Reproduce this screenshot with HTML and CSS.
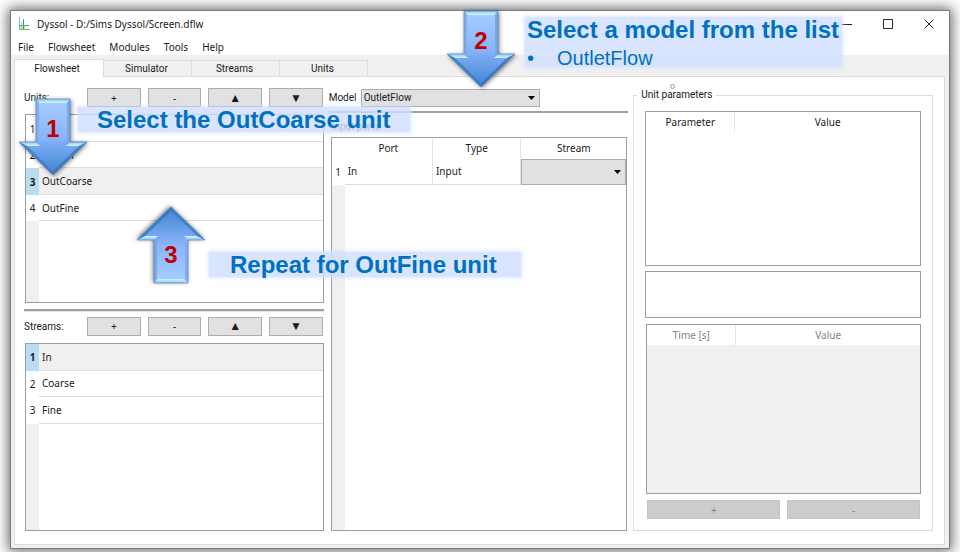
FILE: index.html
```html
<!DOCTYPE html>
<html lang="en">
<head>
<meta charset="utf-8">
<title>Dyssol - D:/Sims Dyssol/Screen.dflw</title>
<link rel="stylesheet" href="styles.css">
</head>
<body>
<svg class="defs" width="0" height="0" aria-hidden="true">
  <defs>
    <linearGradient id="face" x1="0" y1="0" x2="0" y2="1">
      <stop offset="0" stop-color="#a6ceff"/>
      <stop offset=".5" stop-color="#8ab4fb"/>
      <stop offset=".7" stop-color="#6aa0ea"/>
      <stop offset="1" stop-color="#3f82d0"/>
    </linearGradient>
    <linearGradient id="shine" x1="0" y1="0" x2="0" y2="1">
      <stop offset="0" stop-color="#8cc4f6"/>
      <stop offset="1" stop-color="#d6f6ff"/>
    </linearGradient>
    <symbol id="arrow" viewBox="0 0 68 78">
      <path d="M17 1H51V44H68L34 77L0 44H17Z" fill="url(#face)"/>
      <path d="M17 1H51L47 5H21Z" fill="url(#shine)"/>
      <path d="M0 44H17L21 48H8ZM51 44H68L60 48H47Z" fill="url(#shine)"/>
      <path d="M17 1L20 5V47L17 44Z" fill="#82aeec"/>
      <path d="M51 1L48 5V47L51 44Z" fill="#7aa6ec"/>
      <path d="M0 44L8 48L34 73V77Z" fill="#3d78bf" fill-opacity=".75"/>
      <path d="M68 44L60 48L34 73V77Z" fill="#3570b8" fill-opacity=".75"/>
      <path d="M17 1H51V44H68L34 77L0 44H17Z" fill="none" stroke="#4a7ebb" stroke-opacity=".6"/>
    </symbol>
  </defs>
</svg>

<main class="window">
  <header class="titlebar">
    <svg class="logo" viewBox="0 0 14 14" aria-hidden="true">
      <path d="M2 9H8V13H2Z" fill="#e4e650" fill-opacity=".8"/>
      <path d="M1.500 0V13" stroke="#6cc0c8" fill="none"/>
      <path d="M5.500 2V13" stroke="#3b8fb5" fill="none"/>
      <path d="M3.500 5V12" stroke="#b9d86a" fill="none"/>
      <path d="M1 8.500H11" stroke="#4aa3c4" fill="none"/>
      <path d="M2 12.500H12" stroke="#6fb9a8" fill="none"/>
    </svg>
    <h1 class="title">Dyssol - D:/Sims Dyssol/Screen.dflw</h1>
    <button class="caption" aria-label="Minimize"><svg viewBox="0 0 10 10"><path d="M0 5.500H10"/></svg></button>
    <button class="caption" aria-label="Maximize"><svg viewBox="0 0 10 10"><path d="M.5 .5H9.500V9.500H.5Z"/></svg></button>
    <button class="caption" aria-label="Close"><svg viewBox="0 0 10 10"><path d="M.5 .5L9.500 9.500M9.500 .5L.5 9.500"/></svg></button>
  </header>

  <nav class="menu">
    <button>File</button><button>Flowsheet</button><button>Modules</button><button>Tools</button><button>Help</button>
  </nav>

  <div class="workspace">
    <div class="tabs" role="tablist">
      <button class="tab active" role="tab" aria-selected="true">Flowsheet</button>
      <button class="tab" role="tab">Simulator</button>
      <button class="tab" role="tab">Streams</button>
      <button class="tab" role="tab">Units</button>
    </div>

    <div class="pane">
      <section class="column">
        <div class="toolbar">
          <span class="toolbar-label">Units:</span>
          <button class="push">+</button><button class="push">-</button><button class="push move">▲</button><button class="push move">▼</button>
        </div>
        <div class="list">
          <table>
            <tr><th scope="row">1</th><td></td></tr>
            <tr><th scope="row">2</th><td>Screen</td></tr>
            <tr class="selected"><th scope="row">3</th><td>OutCoarse</td></tr>
            <tr><th scope="row">4</th><td>OutFine</td></tr>
          </table>
        </div>
        <hr>
        <div class="toolbar">
          <span class="toolbar-label">Streams:</span>
          <button class="push">+</button><button class="push">-</button><button class="push move">▲</button><button class="push move">▼</button>
        </div>
        <div class="list">
          <table>
            <tr class="selected"><th scope="row">1</th><td>In</td></tr>
            <tr><th scope="row">2</th><td>Coarse</td></tr>
            <tr><th scope="row">3</th><td>Fine</td></tr>
          </table>
        </div>
      </section>

      <section class="column">
        <div class="model">
          <label for="model">Model</label>
          <select id="model"><option>OutletFlow</option></select>
        </div>
        <hr class="model-rule">
        <h2 class="ports-title">Input ports</h2>
        <div class="list ports">
          <table>
            <thead><tr><td class="corner"></td><th>Port</th><th>Type</th><th class="stream">Stream</th></tr></thead>
            <tbody><tr><th scope="row">1</th><td>In</td><td>Input</td><td class="cell-select"><select aria-label="Stream"><option></option></select></td></tr></tbody>
          </table>
        </div>
      </section>

      <fieldset class="params">
        <legend>Unit parameters</legend>
        <div class="grid-box parameters"><table><tr><th class="first">Parameter</th><th>Value</th></tr></table></div>
        <textarea class="description" aria-label="Description"></textarea>
        <div class="grid-box times"><table><tr><th class="first">Time [s]</th><th>Value</th></tr></table></div>
        <div class="pair"><button class="push" disabled>+</button><button class="push" disabled>-</button></div>
      </fieldset>
    </div>
  </div>
</main>

<aside class="callout one">Select the OutCoarse unit</aside>
<aside class="callout two">Select a model from the list
  <ul><li>OutletFlow</li></ul>
</aside>
<aside class="callout three">Repeat for OutFine unit</aside>
<div class="step s1"><svg><use href="#arrow"/></svg><b>1</b></div>
<div class="step s2"><svg><use href="#arrow"/></svg><b>2</b></div>
<div class="step s3"><svg><use href="#arrow"/></svg><b>3</b></div>
<span class="handle"></span>
</body>
</html>
```
FILE: styles.css
```css
* { box-sizing: border-box; }
body {
  position: relative;
  margin: 0;
  min-height: 100vh;
  padding: 10px 10px 3px;
  display: flex;
  overflow: hidden;
  background: #fff;
  color: #1a1a1a;
  font: 10px/14px "Noto Sans", "Open Sans", sans-serif;
}
button, select, textarea { font: inherit; color: inherit; border-radius: 0; margin: 0; }
.defs { position: absolute; }

.window {
  flex: 1;
  display: flex;
  flex-direction: column;
  border: 1px solid #7b7b7b;
  background: #fff;
  box-shadow: 0 0 12px 2px rgba(0, 0, 0, .6);
}

.titlebar { display: flex; align-items: center; height: 26px; padding-left: 7px; }
.logo { width: 14px; height: 14px; margin-right: 5px; }
.title { flex: 1; margin: 0; font-size: 10px; font-weight: 400; }
.caption { width: 41px; padding: 0; border: 0; background: none; display: flex; justify-content: center; }
.caption svg { width: 10px; height: 10px; fill: none; stroke: #222; }

.menu { display: flex; gap: 14px; height: 18px; padding-left: 7px; }
.menu button { padding: 0; border: 0; background: none; line-height: 18px; height: 20px; }

.workspace { flex: 1; display: flex; flex-direction: column; padding: 4px 4px 3px 3px; background: #f0f0f0; }
.tabs { display: flex; align-items: flex-end; height: 17px; }
.tab, .toolbar-label, .model, .ports-title, legend { font-family: Roboto, "Liberation Sans", sans-serif; }
.tab { width: 88px; height: 16px; padding: 0 2px 0 0; border: 1px solid #dcdcdc; border-width: 1px 1px 0 0; background: #f0f0f0; line-height: 14px; }
.tab.active { width: 90px; height: 18px; margin-bottom: -1px; padding-right: 4px; border-left-width: 1px; background: #fff; z-index: 1; }

.pane {
  flex: 1;
  display: grid;
  grid-template-columns: 1fr 1fr 1fr;
  gap: 5px;
  padding: 11px 11px 13px 9px;
  border: 1px solid #dcdcdc;
  background: #fff;
}
.column { display: flex; flex-direction: column; min-width: 0; }
.toolbar { display: flex; gap: 7px; height: 19px; padding-right: 1px; align-items: stretch; }
.toolbar-label { width: 56px; line-height: 20px; }
.push { flex: 1; padding: 0; border: 1px solid #adadad; background: #e1e1e1; line-height: 14px; }
.move { font-size: 12px; }
.push:disabled { border-color: #c4c4c4; background: #ccc; color: #838383; }
hr { width: 100%; height: 3px; margin: 6px 0 5px; border: 1px solid #a0a0a0; border-width: 2px 0 1px; border-bottom-color: #e4e4e4; }
.list { flex: 1 1 0; margin: 7px 0 0 1px; border: 1px solid #9a9ca6; background: linear-gradient(90deg, #f0f0f0 13px, #fff 13px); }
table { width: 100%; border-collapse: separate; border-spacing: 0; table-layout: fixed; }
th, td { padding: 0; font-weight: 400; }
.list tr { height: 27px; background: #fff; }
.list tr:nth-child(even) { height: 26px; }
.list th[scope] { width: 13px; }
.list td { padding-left: 3px; border-bottom: 1px solid #dcdcdc; }
.list .selected { background: #f0f0f0; }
.list .selected th { background: #b9dcf3; font-weight: 700; }

.model { display: flex; align-items: center; gap: 4px; height: 19px; }
.model label { width: 28px; }
select {
  appearance: none;
  padding: 0;
  border: 1px solid #adadad;
  background: #e1e1e1 url("data:image/svg+xml,%3Csvg xmlns='http://www.w3.org/2000/svg' viewBox='0 0 7 4'%3E%3Cpath d='M0 0H7L3.5 4Z'/%3E%3C/svg%3E") right 4px center / 7px 4px no-repeat;
}
.model select { width: 179px; height: 18px; padding-left: 2px; }
.model-rule { margin: 4px 0 7px; height: 2px; border-bottom: 0; }
.ports-title { margin: 0; font-size: 10px; line-height: 14px; font-weight: 400; padding-left: 3px; color: #333; }
.ports { margin: 3px 1px 0 2px; }
.ports .corner { width: 13px; padding: 0; border: 0; }
.ports thead tr { height: 20px; }
.ports thead th { border-right: 1px solid #e4e4e4; }
.ports tbody td { border-right: 1px solid #e4e4e4; }
.ports .stream { width: 105px; border-right: 0; }
.ports .cell-select { padding: 0; border: 0; }
.cell-select select { display: block; width: 100%; height: 26px; }

.params { display: flex; flex-direction: column; min-width: 0; margin: 0; padding: 9px 11px 11px; border: 1px solid #dcdcdc; }
.params legend { padding: 0 4px; margin-left: -8px; }
.grid-box { border: 1px solid #9a9ca6; }
.grid-box th { height: 20px; background: #fff; text-align: center; }
.grid-box .first { width: 89px; border-right: 1px solid #e4e4e4; }
.parameters { height: 155px; }
.description { width: 100%; height: 47px; margin: 5px 0 6px; border: 1px solid #9a9ca6; resize: none; background: #fff; }
.times { flex: 1; margin-left: 1px; background: #f0f0f0; color: #838383; }
.pair { display: flex; gap: 7px; height: 19px; margin: 6px 1px 0 2px; }

.callout {
  position: absolute;
  background: rgba(207, 223, 255, .8);
  box-shadow: 0 0 4px 1px rgba(207, 223, 255, .8);
  color: #0070c0;
  font: 700 24px/26px "Liberation Sans", Arial, sans-serif;
  white-space: nowrap;
}
.one { left: 78px; top: 107px; width: 332px; height: 25px; padding-left: 19px; }
.two { left: 525px; top: 17px; width: 317px; height: 50px; padding-left: 2px; }
.three { left: 209px; top: 252px; width: 312px; height: 25px; padding-left: 21px; }
.callout ul { margin: 0; padding-left: 30px; font-size: 20px; font-weight: 400; line-height: 30px; list-style: none; }
.callout li::before { content: "•"; float: left; margin-left: -30px; }

.step { position: absolute; width: 68px; height: 78px; text-align: center; }
.step svg { display: block; width: 68px; height: 78px; filter: drop-shadow(1px 1px 2px rgba(0, 0, 0, .5)); }
.step b { position: absolute; inset: 18px 0 auto; color: #c00000; font: 700 24px/26px "Liberation Sans", Arial, sans-serif; }
.s1 { left: 19px; top: 98px; }
.s2 { left: 447px; top: 10px; }
.s3 { left: 137px; top: 206px; }
.s3 svg { transform: rotate(180deg); }
.s3 b { top: 36px; }
.handle { position: absolute; left: 670px; top: 84px; width: 5px; height: 5px; border: 1px solid #999; border-radius: 50%; }
```
